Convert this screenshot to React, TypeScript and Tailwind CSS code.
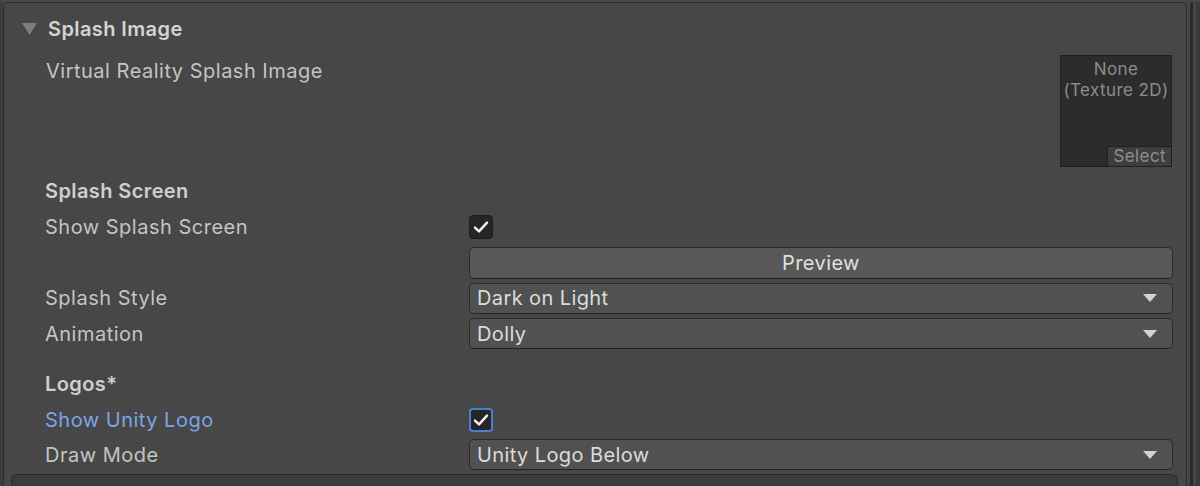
const font = { fontFamily: "Inter, 'Noto Sans', sans-serif" };

function Check({ focused }: { focused?: boolean }) {
  return (
    <div
      className={
        "flex h-[24px] w-[24px] items-center justify-center rounded-[4px] bg-[#252525] " +
        (focused ? "border-2 border-[#4b7ed0]" : "border border-[#1c1c1c]")
      }
    >
      <svg width="18" height="18" viewBox="0 0 18 18">
        <path d="M3 9.6 L7 13.4 L15 4.6" fill="none" stroke="#f2f2f2" strokeWidth="2.4" strokeLinecap="round" strokeLinejoin="round" />
      </svg>
    </div>
  );
}

function Dropdown({ value }: { value: string }) {
  return (
    <div className="flex h-[31px] w-full items-center justify-between rounded-[5px] border border-[#2b2b2b] border-b-[#242424] bg-[#515151] pl-[7px] pr-[14px] text-[20px] tracking-[0.4px] text-[#dcdcdc]">
      <span>{value}</span>
      <svg width="16" height="10" viewBox="0 0 16 10">
        <path d="M1 1 H15 L8 9 Z" fill="#d2d2d2" />
      </svg>
    </div>
  );
}

function Row({ label, blue, children }: { label: string; blue?: boolean; children?: React.ReactNode }) {
  return (
    <div className="flex h-[35px] items-center">
      <div className={"w-[424px] shrink-0 text-[20px] tracking-[0.5px] " + (blue ? "text-[#7aa5e6]" : "text-[#c4c4c4]")}>{label}</div>
      <div className="flex flex-1 items-center">{children}</div>
    </div>
  );
}

function SubHeader({ text }: { text: string }) {
  return (
    <div className="flex h-[36px] items-center text-[20px] font-semibold tracking-[0.4px] text-[#cfcfcf]">{text}</div>
  );
}

export default function App() {
  return (
    <div className="flex h-[486px] w-[1200px] flex-col overflow-hidden bg-[#474747]" style={font}>
      <div className="h-[2px] bg-[#454545]" />
      <div className="h-[2px] bg-[#2a2a2a]" />
      <div className="flex flex-1 pt-[2px]">
        <div className="w-[3px] bg-[#3c3c3c]" />
        {/* main foldout panel */}
        <div className="flex w-[1184px] flex-col rounded-t-[5px] border border-b-0 border-[#2c2c2c] bg-[#474747]">
          <div className="box-content flex h-[34px] items-center pl-[18px] pt-[9px]">
            <svg width="15" height="12" viewBox="0 0 15 12" className="mr-[11px]">
              <path d="M0 0 H15 L7.5 12 Z" fill="#7e7e7e" />
            </svg>
            <span className="text-[20px] font-semibold tracking-[0.4px] text-[#d4d4d4]">Splash Image</span>
          </div>

          <div className="pl-[41px] pr-[13px]">
            <div className="box-content flex h-[118px] justify-between pt-[9px]">
              <div className="flex h-[32px] items-center pl-[1px] text-[20px] tracking-[0.5px] text-[#c4c4c4]">Virtual Reality Splash Image</div>
              <div className="mr-[1px] flex h-[112px] w-[112px] flex-col items-center border border-[#1f1f1f] bg-[#2c2c2c] pt-[3px] text-[17px] leading-[21px] tracking-[0.4px] text-[#8c8c8c]">
                <span>None</span>
                <span>(Texture 2D)</span>
                <div className="mt-auto self-end border-l border-t border-[#1f1f1f] bg-[#3e3e3e] px-[5px] text-[17px] leading-[19px] text-[#909090]">
                  Select
                </div>
              </div>
            </div>
          </div>

          <div className="flex flex-col pl-[41px] pr-[13px]">
            <SubHeader text="Splash Screen" />
            <div className="flex h-[36px] items-center">
              <div className="w-[424px] shrink-0 text-[20px] tracking-[0.5px] text-[#c4c4c4]">Show Splash Screen</div>
              <Check />
            </div>
            <Row label="">
              <div className="flex h-[32px] w-full items-center justify-center rounded-[5px] border border-[#2b2b2b] border-b-[#232323] bg-[#585858] text-[20px] tracking-[0.4px] text-[#e0e0e0]">
                Preview
              </div>
            </Row>
            <div className="flex h-[36px] items-center">
              <div className="w-[424px] shrink-0 text-[20px] tracking-[0.5px] text-[#c4c4c4]">Splash Style</div>
              <Dropdown value="Dark on Light" />
            </div>
            <Row label="Animation">
              <Dropdown value="Dolly" />
            </Row>

            <div className="h-[15px]" />
            <SubHeader text="Logos*" />
            <Row label="Show Unity Logo" blue>
              <Check focused />
            </Row>
            <Row label="Draw Mode">
              <Dropdown value="Unity Logo Below" />
            </Row>
          </div>

          <div className="ml-[7px] mr-[8px] mt-[2px] h-[20px] rounded-t-[6px] border border-b-0 border-[#2a2a2a] bg-[#3b3b3b]" />
        </div>
        <div className="w-[3px]" />
        <div className="w-[3px] bg-[#2b2b2b]" />
        <div className="w-[3px]" />
        <div className="w-[4px] bg-[#3a3a3a]" />
      </div>
    </div>
  );
}
